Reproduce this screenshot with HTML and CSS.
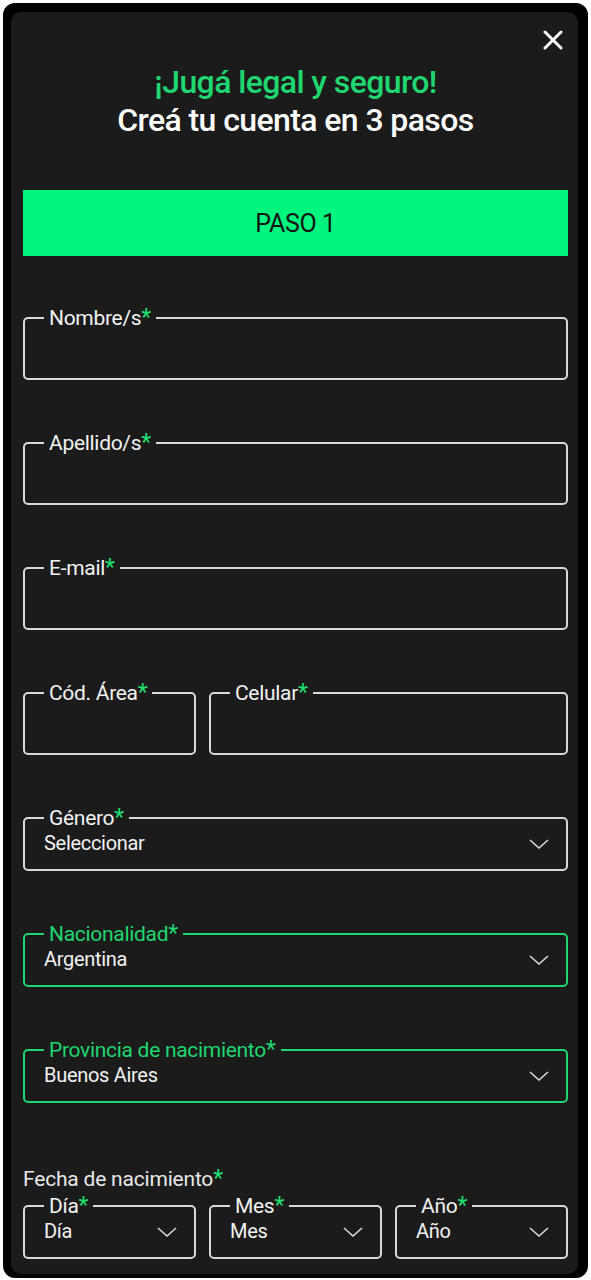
FILE: index.html
```html
<!DOCTYPE html>
<html lang="es">
<head>
<meta charset="utf-8">
<title>Registro</title>
<link rel="stylesheet" href="styles.css">
</head>
<body>
<div class="frame">
  <div class="card">
    <div class="top-row">
      <button class="close" aria-label="Cerrar">
        <svg width="20" height="20" viewBox="0 0 20 20"><path d="M2 2 L18 18 M18 2 L2 18" stroke="#fff" stroke-width="3" stroke-linecap="round"/></svg>
      </button>
    </div>
    <h1 class="title"><span class="title-green">¡Jugá legal y seguro!</span><span class="title-white">Creá tu cuenta en 3 pasos</span></h1>
    <div class="step">PASO 1</div>
    <form class="form">
      <fieldset class="field text">
        <legend>Nombre/s<span class="req">*</span></legend>
        <input class="input" type="text">
      </fieldset>
      <fieldset class="field text">
        <legend>Apellido/s<span class="req">*</span></legend>
        <input class="input" type="text">
      </fieldset>
      <fieldset class="field text">
        <legend>E-mail<span class="req">*</span></legend>
        <input class="input" type="text">
      </fieldset>
      <div class="phone-row">
        <fieldset class="field text">
          <legend>Cód. Área<span class="req">*</span></legend>
          <input class="input" type="text">
        </fieldset>
        <fieldset class="field text">
          <legend>Celular<span class="req">*</span></legend>
          <input class="input" type="text">
        </fieldset>
      </div>
      <fieldset class="field select">
        <legend>Género<span class="req">*</span></legend>
        <div class="value"><span>Seleccionar</span><svg class="chev" width="20" height="10" viewBox="0 0 20 10"><path d="M1 1 L10 9 L19 1" fill="none" stroke="#d8d8d8" stroke-width="1.6"/></svg></div>
      </fieldset>
      <fieldset class="field select active">
        <legend>Nacionalidad<span class="req">*</span></legend>
        <div class="value"><span>Argentina</span><svg class="chev" width="20" height="10" viewBox="0 0 20 10"><path d="M1 1 L10 9 L19 1" fill="none" stroke="#d8d8d8" stroke-width="1.6"/></svg></div>
      </fieldset>
      <fieldset class="field select active">
        <legend>Provincia de nacimiento<span class="req">*</span></legend>
        <div class="value"><span>Buenos Aires</span><svg class="chev" width="20" height="10" viewBox="0 0 20 10"><path d="M1 1 L10 9 L19 1" fill="none" stroke="#d8d8d8" stroke-width="1.6"/></svg></div>
      </fieldset>
      <div class="date-group">
        <div class="group-label">Fecha de nacimiento<span class="req">*</span></div>
        <div class="date-row">
          <fieldset class="field select">
            <legend>Día<span class="req">*</span></legend>
            <div class="value"><span>Día</span><svg class="chev" width="20" height="10" viewBox="0 0 20 10"><path d="M1 1 L10 9 L19 1" fill="none" stroke="#d8d8d8" stroke-width="1.6"/></svg></div>
          </fieldset>
          <fieldset class="field select">
            <legend>Mes<span class="req">*</span></legend>
            <div class="value"><span>Mes</span><svg class="chev" width="20" height="10" viewBox="0 0 20 10"><path d="M1 1 L10 9 L19 1" fill="none" stroke="#d8d8d8" stroke-width="1.6"/></svg></div>
          </fieldset>
          <fieldset class="field select">
            <legend>Año<span class="req">*</span></legend>
            <div class="value"><span>Año</span><svg class="chev" width="20" height="10" viewBox="0 0 20 10"><path d="M1 1 L10 9 L19 1" fill="none" stroke="#d8d8d8" stroke-width="1.6"/></svg></div>
          </fieldset>
        </div>
      </div>
    </form>
  </div>
</div>
</body>
</html>
```

FILE: styles.css
```css
* { box-sizing: border-box; }
html, body {
  margin: 0;
  padding: 0;
  background: #fff;
  height: 1280px;
  overflow: hidden;
}
body {
  font-family: Roboto, "Liberation Sans", sans-serif;
  color: #f2f2f2;
}
.frame {
  margin: 3px 3px 0 3px;
  height: 1275px;
  background: #000;
  border-radius: 12px;
  padding: 9px 10px 4px 8px;
}
.card {
  background: #1b1b1b;
  border-radius: 10px;
  height: 100%;
  padding: 0 10px 0 12px;
  overflow: hidden;
}
.top-row {
  display: flex;
  justify-content: flex-end;
  padding: 18px 5px 0 0;
}
.close {
  width: 20px;
  height: 20px;
  padding: 0;
  border: 0;
  background: none;
  display: block;
}
.close svg { display: block; }
.title {
  margin: 13px 0 0;
  display: flex;
  flex-direction: column;
  align-items: center;
  font-size: 32px;
  line-height: 38px;
  font-weight: 500;
  letter-spacing: -0.6px;
}
.title-green { color: #1fd670; }
.title-white { color: #fff; }
.step {
  margin-top: 51px;
  height: 66px;
  background: #00f57e;
  color: #141414;
  font-size: 25px;
  letter-spacing: -0.4px;
  display: flex;
  align-items: center;
  justify-content: center;
}
.form {
  margin-top: 51px;
  display: flex;
  flex-direction: column;
  gap: 52px;
}
.field {
  margin: 0;
  min-width: 0;
  border: 2px solid #d9d9d9;
  border-radius: 5px;
  padding: 0 17px 0 19px;
}
.field legend {
  padding: 0 5px;
  font-size: 21px;
  line-height: 22px;
  letter-spacing: -0.3px;
  color: #f2f2f2;
}
.req {
  color: #1fe070;
  font-size: 23px;
}
.field.active { border-color: #1fd670; }
.field.active legend,
.field.active legend .req { color: #1fd670; }
.input {
  display: block;
  width: 100%;
  height: 49px;
  border: 0;
  background: transparent;
  outline: none;
  color: #fff;
  font: inherit;
}
.select .value {
  display: flex;
  align-items: center;
  justify-content: space-between;
  height: 22px;
  margin-top: 3px;
  margin-bottom: 15px;
  font-size: 20px;
  line-height: 22px;
  letter-spacing: -0.3px;
  color: #f2f2f2;
}
.chev { display: block; margin-top: 2px; }
.phone-row {
  display: grid;
  grid-template-columns: 173px 1fr;
  gap: 13px;
}
.date-group { margin-top: 12px; }
.group-label {
  font-size: 21px;
  line-height: 24px;
  letter-spacing: -0.2px;
  color: #e8e8e8;
  margin-bottom: 4px;
}
.date-row {
  display: grid;
  grid-template-columns: repeat(3, 1fr);
  gap: 13px;
}
```
